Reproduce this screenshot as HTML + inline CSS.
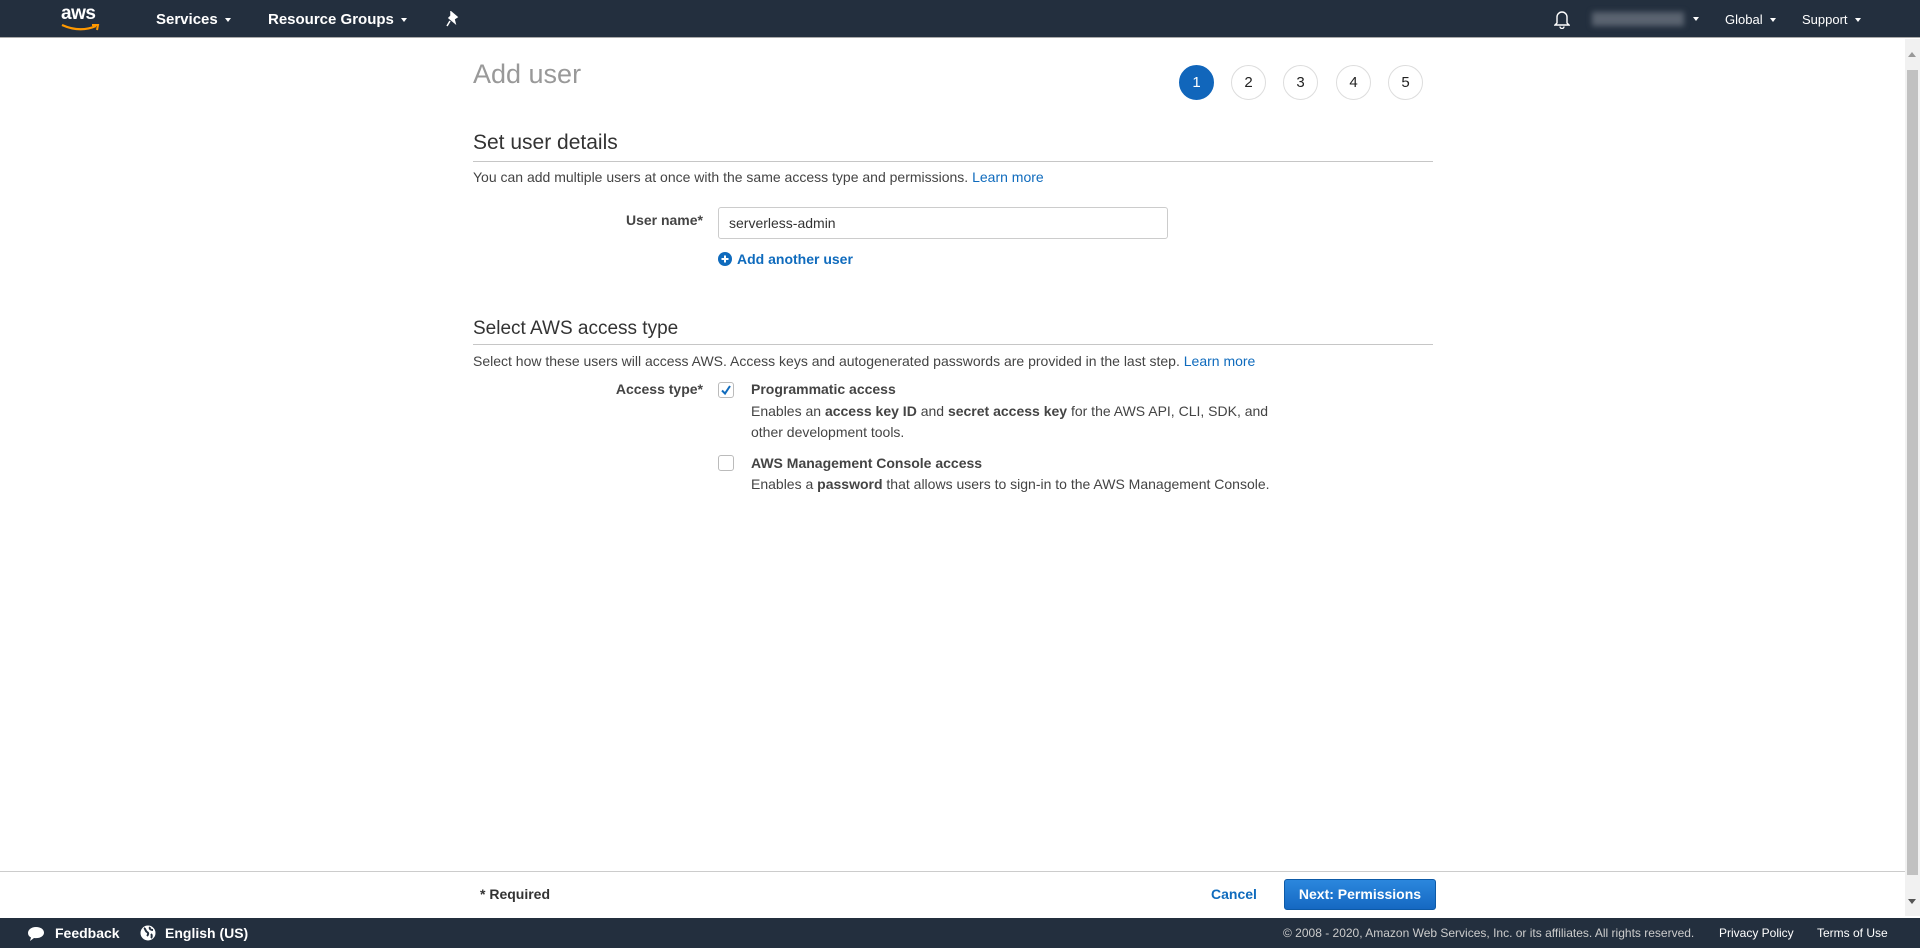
<!DOCTYPE html>
<html><head><meta charset="utf-8"><style>
*{box-sizing:border-box;margin:0;padding:0}
body{width:1920px;height:948px;overflow:hidden;background:#fff;font-family:"Liberation Sans",Arial,sans-serif;color:#444;font-size:14px;position:relative}
.a{position:absolute;white-space:nowrap}
#hdr{position:absolute;left:0;top:0;width:1920px;height:38px;background:#232f3e;border-bottom:1px solid #aaa}
.hw{color:#fff;font-weight:bold;font-size:15px;top:11px}
.hr{color:#fff;font-size:13px;top:12px}
.car{display:inline-block;margin-left:7px;border-left:3.5px solid transparent;border-right:3.5px solid transparent;border-top:4px solid #fff;vertical-align:2px}
.step{position:absolute;top:65px;width:35px;height:35px;border-radius:50%;border:1px solid #ddd;text-align:center;line-height:33px;font-size:15px;color:#222}
h2{position:absolute;left:473px;font-weight:normal;font-size:21px;color:#333}
.rule{position:absolute;left:473px;width:960px;height:1px;background:#c6c6c6}
a{color:#0f6bbd;text-decoration:none}
.lbl{font-weight:bold;color:#444;text-align:right;width:240px}
.cb{position:absolute;left:718px;width:16px;height:16px;border:1px solid #bbb;border-radius:3px;background:#fff}
#foot{position:absolute;left:0;top:871px;width:1905px;height:47px;border-top:1px solid #ccc;background:#fff}
#bot{position:absolute;left:0;top:918px;width:1920px;height:30px;background:#232f3e}
</style></head><body>
<div id="hdr">
 <div class="a" style="left:61px;top:3px;color:#fff;font-size:19px;font-weight:bold;letter-spacing:-0.5px">aws</div>
 <svg class="a" style="left:60px;top:23px" width="42" height="10" viewBox="0 0 42 10"><path d="M2 2 Q20 10 36 3" stroke="#f90" stroke-width="2.2" fill="none"/><path d="M32 2 L38 2 L37 7" stroke="#f90" stroke-width="2" fill="none"/></svg>
 <div class="a hw" style="left:156px">Services<span class="car"></span></div>
 <div class="a hw" style="left:268px">Resource Groups<span class="car"></span></div>
 <svg class="a" style="left:446px;top:11px" width="14" height="16" viewBox="0 0 14 16"><path d="M5 1 L11 6 L8 8 L9 12 L3 7 L5 5 Z M4 10 L1 15" stroke="#fff" stroke-width="1.5" fill="#fff"/></svg>
 <svg class="a" style="left:1554px;top:10px" width="16" height="19" viewBox="0 0 16 19"><path d="M3 13 V7 a5 5 0 0 1 10 0 V13 L15 15 H1 Z M6 16.5 a2 2 0 0 0 4 0" stroke="#fff" stroke-width="1.4" fill="none"/></svg>
 <div class="a" style="left:1592px;top:12px;width:92px;height:14px;background:#5a6370;filter:blur(3px)"></div>
 <span class="a car" style="left:1686px;top:17px"></span>
 <div class="a hr" style="left:1725px">Global<span class="car"></span></div>
 <div class="a hr" style="left:1802px">Support<span class="car"></span></div>
</div>

<div class="a" style="left:473px;top:59px;font-size:27px;color:#999">Add user</div>
<div class="step" style="left:1179px;background:#1166bb;border-color:#1166bb;color:#fff">1</div>
<div class="step" style="left:1231px">2</div>
<div class="step" style="left:1283px">3</div>
<div class="step" style="left:1336px">4</div>
<div class="step" style="left:1388px">5</div>

<h2 style="top:131px">Set user details</h2>
<div class="rule" style="top:161px"></div>
<div class="a" style="left:473px;top:169px">You can add multiple users at once with the same access type and permissions. <a>Learn more</a></div>
<div class="a lbl" style="left:463px;top:212px">User name*</div>
<div class="a" style="left:718px;top:207px;width:450px;height:32px;border:1px solid #ccc;border-radius:3px;padding:7px 10px;color:#333">serverless-admin</div>
<svg class="a" style="left:718px;top:252px" width="14" height="14" viewBox="0 0 14 14"><circle cx="7" cy="7" r="7" fill="#0f6bbd"/><path d="M7 3.5V10.5M3.5 7H10.5" stroke="#fff" stroke-width="2"/></svg>
<div class="a" style="left:737px;top:251px;font-weight:bold;color:#0f6bbd">Add another user</div>

<h2 style="top:318px;font-size:19px">Select AWS access type</h2>
<div class="rule" style="top:344px"></div>
<div class="a" style="left:473px;top:353px">Select how these users will access AWS. Access keys and autogenerated passwords are provided in the last step. <a>Learn more</a></div>
<div class="a lbl" style="left:463px;top:381px">Access type*</div>
<div class="cb" style="top:382px"><svg width="14" height="14" viewBox="0 0 14 14" style="position:absolute;left:0;top:0"><path d="M3 7.5 L6 10.5 L11 3" stroke="#0f6bbd" stroke-width="2" fill="none"/></svg></div>
<div class="a" style="left:751px;top:381px;font-weight:bold">Programmatic access</div>
<div class="a" style="left:751px;top:401px;line-height:21px">Enables an <b>access key ID</b> and <b>secret access key</b> for the AWS API, CLI, SDK, and<br>other development tools.</div>
<div class="cb" style="top:455px"></div>
<div class="a" style="left:751px;top:455px;font-weight:bold">AWS Management Console access</div>
<div class="a" style="left:751px;top:476px">Enables a <b>password</b> that allows users to sign-in to the AWS Management Console.</div>

<div class="a" style="left:1905px;top:39px;width:15px;height:877px;background:#f1f1f1"></div>
<div class="a" style="left:1907px;top:70px;width:11px;height:805px;background:#c1c1c1"></div>
<div class="a" style="left:1908px;top:52px;border-left:4px solid transparent;border-right:4px solid transparent;border-bottom:5px solid #999"></div>
<div class="a" style="left:1908px;top:899px;border-left:4px solid transparent;border-right:4px solid transparent;border-top:5px solid #555"></div>

<div id="foot">
 <div class="a" style="left:480px;top:14px;font-weight:bold;color:#333">* Required</div>
 <div class="a" style="left:1211px;top:14px;font-weight:bold;color:#0f6bbd">Cancel</div>
 <div class="a" style="left:1284px;top:7px;width:152px;height:31px;border:1px solid #0d5aa7;border-radius:3px;background:linear-gradient(#2b87dd,#1568c2);color:#fff;font-weight:bold;text-align:center;line-height:29px">Next: Permissions</div>
</div>
<div id="bot">
 <svg class="a" style="left:27px;top:8px" width="18" height="16" viewBox="0 0 18 16"><path d="M9 1C4 1 1 4 1 7c0 2 1 3.5 3 4.5L3 15l4-3c.7.1 1.3.1 2 .1 5 0 8-2.5 8-5.5S14 1 9 1z" fill="#fff"/></svg>
 <div class="a" style="left:55px;top:7px;color:#fff;font-weight:bold">Feedback</div>
 <svg class="a" style="left:140px;top:7px" width="16" height="16" viewBox="0 0 16 16"><circle cx="8" cy="8" r="7.5" fill="#fff"/><path d="M4 3c2 1 1 3 3 4s1 3 0 4M10 2c-1 2 1 3 3 3M11 9c1 1 1 3 0 4" stroke="#232f3e" stroke-width="2" fill="none"/></svg>
 <div class="a" style="left:165px;top:7px;color:#fff;font-weight:bold">English (US)</div>
 <div class="a" style="left:1283px;top:8px;color:#ccc;font-size:12px">© 2008 - 2020, Amazon Web Services, Inc. or its affiliates. All rights reserved.</div>
 <div class="a" style="left:1719px;top:8px;color:#fff;font-size:12px">Privacy Policy</div>
 <div class="a" style="left:1817px;top:8px;color:#fff;font-size:12px">Terms of Use</div>
</div>
</body></html>
